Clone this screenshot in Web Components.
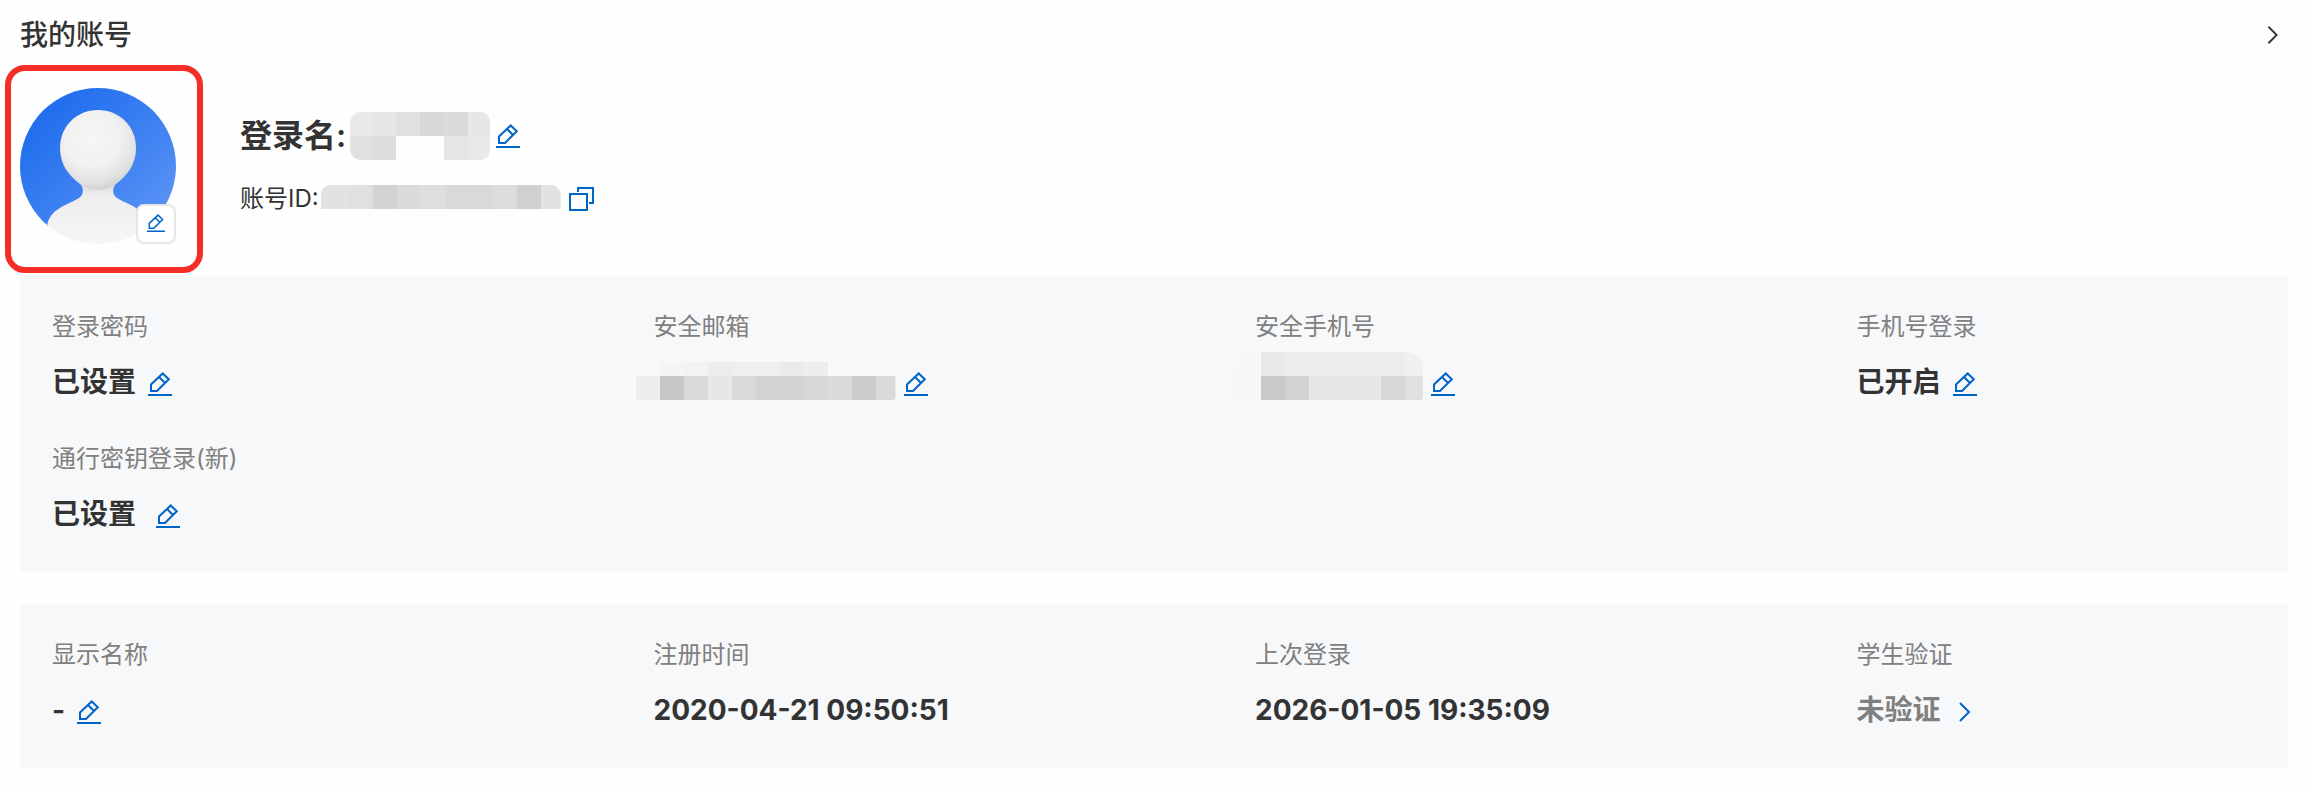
<!DOCTYPE html>
<html lang="zh-CN">
<head>
<meta charset="utf-8">
<meta name="viewport" content="width=device-width, initial-scale=1">
<title>我的账号</title>
<style>
body {
	margin: 0;
	background: #fefefe;
	color: #333;
	font-family: Inter, "Noto Sans CJK SC", sans-serif;
}
</style>
</head>
<body>
<account-page></account-page>
<script>
const xmlns = 'http://www.w3.org/2000/svg';
const icons = {
	edit: {
		width: 24,
		body: '<path d="M3 19V12.5L14.7 1.5L20.8 7.3L9 19Z M11 5L17 11 M0 23H24" />',
	},
	copy: {
		width: 25,
		body: '<path d="M1 7H18V23H1Z M9 5V1H24V16H20" />',
	},
	chevron: {
		width: 24,
		body: '<path d="M7 3L16 12L7 21" />',
	},
};

/** Rows are [y, height, x0, color, x1, color, ... , xEnd] */
const masks = {
	name: {
		width: 140, height: 48, clip: 'inset(0 round 10px)',
		rows: [
			[0, 24, 0, '#e9e9e9', 22, '#e6e6e6', 46, '#e0e0e0', 70, '#d8d8d8', 94, '#dadada', 118, '#e7e7e7', 140],
			[24, 24, 0, '#e1e1e1', 22, '#dcdcdc', 46, 'none', 94, '#e5e5e5', 118, '#e9e9e9', 140],
		],
	},
	id: {
		width: 240, height: 24, clip: 'inset(0 round 10px 10px 0 0)',
		rows: [
			[0, 24, 0, '#e2e2e2', 28, '#e0e0e0', 52, '#d3d3d3', 76, '#dbdbdb', 100, '#dedede', 124, '#d9d9d9', 172, '#dddddd', 196, '#d0d0d0', 220, '#e2e2e2', 240],
		],
	},
	email: {
		width: 260, height: 48, clip: 'inset(0 round 0 0 3px 3px)',
		rows: [
			[10, 14, 24, '#f5f5f6', 48, '#f2f3f4', 72, '#ededee', 96, '#eeefef', 144, '#e9eaeb', 168, '#eeeef0', 192],
			[24, 24, 0, '#eceeef', 24, '#c7c8ca', 48, '#d9dadc', 72, '#e6e7e9', 96, '#d8d9db', 120, '#d1d2d4', 144, '#d2d3d5', 168, '#d7d8da', 192, '#d9dadc', 216, '#cacbcd', 240, '#d9dadc', 260],
		],
	},
	phone: {
		width: 186, height: 48, clip: 'inset(0 round 16px 16px 3px 3px)',
		rows: [
			[0, 24, 0, '#f6f7f8', 24, '#e8e9ea', 48, '#ebeced', 72, '#ecedee', 120, '#edeeef', 144, '#ecedee', 168, '#eff0f1', 186],
			[24, 24, 0, '#f6f7f8', 24, '#c9cacc', 48, '#d1d2d4', 72, '#e5e7e9', 144, '#d6d7d9', 168, '#dfe1e1', 186],
		],
	},
};

class IconButton extends HTMLElement {
	constructor() {
		super();
		this.attachShadow({ mode: 'open' });
	}

	connectedCallback() {
		const icon = icons[this.getAttribute('icon')];
		this.shadowRoot.innerHTML = `
<style>
:host {
	display: inline-flex;
	flex: none;
	color: #0064c8;
}
button {
	display: flex;
	padding: 0;
	border: none;
	background: transparent;
	color: inherit;
	cursor: pointer;
}
svg {
	display: block;
	height: var(--icon-size, 24px);
	fill: none;
	stroke: currentColor;
	stroke-width: 2;
}
</style>
<button type="button" aria-label="${this.getAttribute('label')}">
	<svg xmlns="${xmlns}" viewBox="0 0 ${icon.width} 24">${icon.body}</svg>
</button>
`;
	}
}
customElements.define('icon-button', IconButton);

class MaskedText extends HTMLElement {
	constructor() {
		super();
		this.attachShadow({ mode: 'open' });
	}

	connectedCallback() {
		const mask = masks[this.getAttribute('kind')];
		const rects = mask.rows.map(([y, height, ...cells]) => {
			let out = '';
			for (let i = 0; i + 2 < cells.length; i += 2) {
				out += `<rect x="${cells[i]}" y="${y}" width="${cells[i + 2] - cells[i]}" height="${height}" fill="${cells[i + 1]}" />`;
			}
			return out;
		}).join('');
		this.shadowRoot.innerHTML = `
<style>
:host {
	display: block;
	flex: none;
}
svg {
	display: block;
	clip-path: ${mask.clip};
	shape-rendering: crispEdges;
}
</style>
<svg xmlns="${xmlns}" width="${mask.width}" height="${mask.height}" aria-hidden="true">${rects}</svg>
`;
	}
}
customElements.define('masked-text', MaskedText);

const avatarTemplate = document.createElement('template');
avatarTemplate.innerHTML = `
<style>
:host {
	display: block;
	position: relative;
	flex: none;
	width: 156px;
	height: 156px;
}
svg {
	display: block;
	width: 100%;
	height: 100%;
}
.marker {
	position: absolute;
	inset: -23px -27px -29px -15px;
	border: 6px solid #f52d27;
	border-radius: 20px;
	pointer-events: none;
}
.badge {
	position: absolute;
	right: 0;
	bottom: 0;
	display: flex;
	align-items: center;
	justify-content: center;
	box-sizing: border-box;
	width: 40px;
	height: 40px;
	padding-bottom: 2px;
	border: 2px solid #e5e5e5;
	border-radius: 8px;
	background: #fff;
	--icon-size: 18px;
}
</style>
<svg xmlns="${xmlns}" viewBox="0 0 156 156" aria-hidden="true">
	<defs>
		<linearGradient id="sky" x1="0.15" y1="0.15" x2="0.9" y2="0.85">
			<stop offset="0" stop-color="#1f6dee" />
			<stop offset="1" stop-color="#5590f4" />
		</linearGradient>
		<radialGradient id="face" gradientUnits="userSpaceOnUse" cx="72" cy="50" r="56">
			<stop offset="0" stop-color="#f6f6f6" />
			<stop offset="0.5" stop-color="#f1f1f1" />
			<stop offset="0.8" stop-color="#e1e1e1" />
			<stop offset="1" stop-color="#cbcbcb" />
		</radialGradient>
		<linearGradient id="torso" x1="0" y1="0" x2="0" y2="1">
			<stop offset="0" stop-color="#d8d8d8" />
			<stop offset="0.25" stop-color="#ededed" />
			<stop offset="1" stop-color="#f6f6f6" />
		</linearGradient>
		<clipPath id="disc"><circle cx="78" cy="78" r="78" /></clipPath>
	</defs>
	<g clip-path="url(#disc)">
		<path fill="url(#sky)" d="M0 0H156V138H0Z" />
		<path fill="url(#torso)" d="M56 92C64 97 65 106 59 110C48 117 30 120 27 138V156H129V138C126 120 108 117 97 110C91 106 92 97 100 92Z" />
		<path fill="url(#face)" d="M78 22C57 22 40 38 40 60C40 76 48 87 60 96C64 99 70 102 78 102C86 102 92 99 96 96C108 87 116 76 116 60C116 38 99 22 78 22Z" />
	</g>
</svg>
<div class="badge"><icon-button icon="edit" label="修改头像"></icon-button></div>
<div class="marker"></div>
`;

class UserAvatar extends HTMLElement {
	constructor() {
		super();
		this.attachShadow({ mode: 'open' });
		this.shadowRoot.appendChild(avatarTemplate.content.cloneNode(true));
	}
}
customElements.define('user-avatar', UserAvatar);

const panelTemplate = document.createElement('template');
panelTemplate.innerHTML = `
<style>
:host {
	display: grid;
	grid-template-columns: repeat(4, minmax(0, 1fr));
	gap: 36px 200px;
	padding: 32px 30px 36px 32px;
	background: #f7f8fa;
}
</style>
<slot></slot>
`;

class InfoPanel extends HTMLElement {
	constructor() {
		super();
		this.attachShadow({ mode: 'open' });
		this.shadowRoot.appendChild(panelTemplate.content.cloneNode(true));
	}
}
customElements.define('info-panel', InfoPanel);

const itemTemplate = document.createElement('template');
itemTemplate.innerHTML = `
<style>
:host {
	display: block;
	white-space: nowrap;
}
.label {
	margin-bottom: 14px;
	color: #808080;
	font-size: 24px;
	line-height: 38px;
}
.value {
	display: flex;
	align-items: center;
	gap: 12px;
	height: 44px;
	font-size: 28px;
	font-weight: 700;
	line-height: 44px;
}
:host([muted]) .value {
	color: #808080;
}
:host([wide]) .value {
	gap: 20px;
}
:host([masked]) .value {
	gap: 8px;
}
::slotted(icon-button) {
	margin-top: 4px;
}
::slotted(masked-text) {
	margin: -12px 0 0 -18px;
}
</style>
<div class="label"></div>
<div class="value"><slot></slot></div>
`;

class InfoItem extends HTMLElement {
	static observedAttributes = ['label'];

	constructor() {
		super();
		this.attachShadow({ mode: 'open' });
		this.shadowRoot.appendChild(itemTemplate.content.cloneNode(true));
	}

	/**
	 * @param {string} _name
	 * @param {string} _oldValue
	 * @param {string} newValue
	 */
	attributeChangedCallback(_name, _oldValue, newValue) {
		this.shadowRoot.querySelector('.label').textContent = newValue;
	}
}
customElements.define('info-item', InfoItem);

const pageTemplate = document.createElement('template');
pageTemplate.innerHTML = `
<style>
:host {
	display: flex;
	flex-direction: column;
	gap: 32px;
	padding: 14px 18px 24px 20px;
}
header {
	display: flex;
	align-items: center;
	justify-content: space-between;
}
h1 {
	margin: 0;
	font-size: 28px;
	font-weight: 500;
	line-height: 42px;
}
header icon-button {
	margin-right: 4px;
	color: #333;
	--icon-size: 22px;
}
.profile {
	display: flex;
	gap: 64px;
}
.info {
	display: flex;
	flex-direction: column;
	gap: 20px;
	padding-top: 24px;
	white-space: nowrap;
}
.name,
.uid {
	display: flex;
	align-items: center;
}
.name {
	gap: 6px;
	font-size: 32px;
	font-weight: 600;
	line-height: 48px;
}
.uid {
	gap: 8px;
	font-size: 24px;
	line-height: 38px;
}
.field {
	display: flex;
	align-items: center;
}
.name .field {
	gap: 4px;
}
.uid .field {
	gap: 2px;
}
.uid masked-text {
	margin-bottom: 4px;
}
</style>
<header>
	<h1>我的账号</h1>
	<icon-button icon="chevron" label="查看账号详情"></icon-button>
</header>
<section class="profile">
	<user-avatar></user-avatar>
	<div class="info">
		<div class="name">
			<div class="field"><span>登录名:</span><masked-text kind="name"></masked-text></div>
			<icon-button icon="edit" label="修改登录名"></icon-button>
		</div>
		<div class="uid">
			<div class="field"><span>账号ID:</span><masked-text kind="id"></masked-text></div>
			<icon-button icon="copy" label="复制账号ID"></icon-button>
		</div>
	</div>
</section>
<info-panel>
	<info-item label="登录密码"><span>已设置</span><icon-button icon="edit" label="修改登录密码"></icon-button></info-item>
	<info-item label="安全邮箱" masked><masked-text kind="email"></masked-text><icon-button icon="edit" label="修改安全邮箱"></icon-button></info-item>
	<info-item label="安全手机号" masked><masked-text kind="phone"></masked-text><icon-button icon="edit" label="修改安全手机号"></icon-button></info-item>
	<info-item label="手机号登录"><span>已开启</span><icon-button icon="edit" label="修改手机号登录"></icon-button></info-item>
	<info-item label="通行密钥登录(新)" wide><span>已设置</span><icon-button icon="edit" label="修改通行密钥"></icon-button></info-item>
</info-panel>
<info-panel>
	<info-item label="显示名称"><span>-</span><icon-button icon="edit" label="修改显示名称"></icon-button></info-item>
	<info-item label="注册时间"><span>2020-04-21 09:50:51</span></info-item>
	<info-item label="上次登录"><span>2026-01-05 19:35:09</span></info-item>
	<info-item label="学生验证" muted><span>未验证</span><icon-button icon="chevron" label="去验证"></icon-button></info-item>
</info-panel>
`;

class AccountPage extends HTMLElement {
	constructor() {
		super();
		this.attachShadow({ mode: 'open' });
		this.shadowRoot.appendChild(pageTemplate.content.cloneNode(true));
	}
}
customElements.define('account-page', AccountPage);
</script>
</body>
</html>
